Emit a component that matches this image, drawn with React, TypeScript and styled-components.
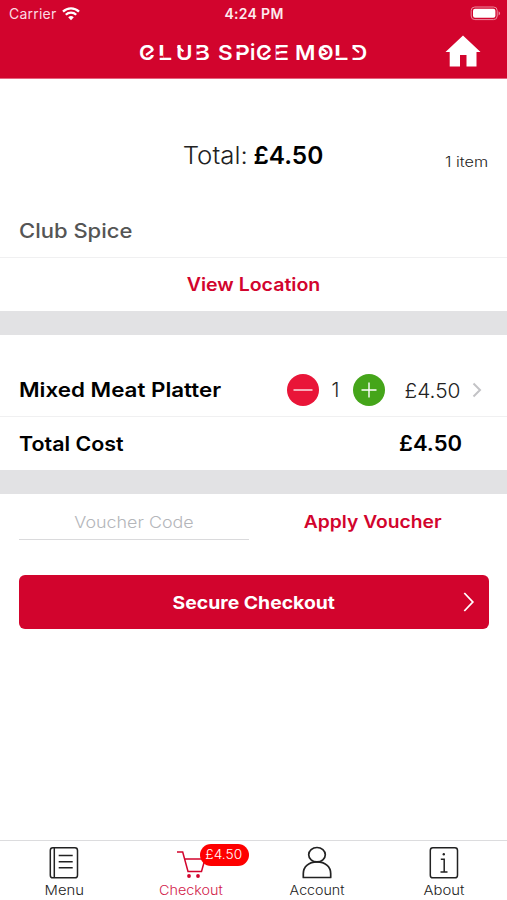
import React from "react";
import styled, { createGlobalStyle, css } from "styled-components";

const RED = "#d2042d";

const GlobalStyle = createGlobalStyle`
  * { box-sizing: border-box; }
  body { margin: 0; background: #fff; font-family: Inter, "Open Sans", sans-serif; color: #000; }
  button { font: inherit; color: inherit; background: none; border: 0; padding: 0; cursor: pointer; }
`;

interface Stretch {
  $stretch: number;
  $from?: "left" | "center" | "right";
}

// Widens the letterforms without changing their height.
const stretched = css<Stretch>`
  display: inline-block;
  white-space: nowrap;
  transform: scaleX(${(p) => p.$stretch});
  transform-origin: ${(p) => p.$from ?? "center"} center;
`;

const Screen = styled.div`
  height: 900px;
  display: flex;
  flex-direction: column;
  overflow: hidden;
`;

const Header = styled.header`
  height: 79px;
  flex: none;
  background: ${RED};
  color: #fff;
  border-bottom: 1px solid #e5647f;
`;

const StatusBar = styled.div`
  height: 27px;
  padding: 0 6px 0 9px;
  display: grid;
  grid-template-columns: 1fr auto 1fr;
  align-items: center;
`;

const Carrier = styled.span`
  display: flex;
  align-items: center;
  gap: 5px;
  font-size: 14px;
  letter-spacing: 0.23px;
  color: #fbdbe2;
`;

const Clock = styled.span`
  font-size: 14px;
  font-weight: 600;
  letter-spacing: 0.3px;
  margin-right: 2px;
  color: #fdeaee;
`;

const Battery = styled.svg`
  justify-self: end;
  display: block;
`;

const TitleBar = styled.div`
  height: 51px;
  padding: 0 26px 0 139px;
  display: flex;
  justify-content: space-between;
  align-items: center;
`;

const Brand = styled.h1`
  margin: 0;
  height: 20px;
  display: flex;
  position: relative;
  font-size: 20.5px;
  font-weight: 600;
  line-height: 20px;
`;

const GlyphCell = styled.span<{ $w: number }>`
  width: ${(p) => p.$w}px;
  flex: none;
`;

const Glyph = styled.span<Stretch>`
  ${stretched}
`;

const BrandDetail = styled.svg`
  position: absolute;
  left: 0;
  top: 0;
`;

const HomeButton = styled.button`
  height: 36px;
  padding-bottom: 3px;
  display: flex;
  align-items: center;
`;

const Summary = styled.section`
  height: 126px;
  padding: 26px 19px 0;
  display: grid;
  grid-template-columns: 1fr auto 1fr;
  align-items: center;
`;

const SummaryTotal = styled.div`
  grid-column: 2;
  display: flex;
  gap: 8px;
  padding-left: 1px;
  font-size: 24px;
  font-weight: 300;
  color: #222;
`;

const SummaryLabel = styled.span<Stretch>`
  ${stretched}
`;

const SummaryAmount = styled.strong<Stretch>`
  ${stretched}
  font-weight: 600;
  color: #000;
`;

const ItemCount = styled.span<Stretch>`
  ${stretched}
  justify-self: end;
  padding-top: 12px;
  font-size: 14px;
  font-weight: 300;
  color: #222;
`;

const Row = styled.div<{ $h: number; $top?: number; $divided?: boolean; $center?: boolean }>`
  height: ${(p) => p.$h}px;
  flex: none;
  padding: ${(p) => p.$top ?? 0}px 19px 0;
  display: flex;
  align-items: center;
  justify-content: ${(p) => (p.$center ? "center" : "space-between")};
  border-bottom: ${(p) => (p.$divided ? "1px solid #f0f0f1" : "0")};
`;

const Merchant = styled.h2<Stretch>`
  ${stretched}
  margin: 0;
  font-size: 20px;
  font-weight: 500;
  color: #555;
`;

const LinkButton = styled.button<Stretch & { $size: number }>`
  ${stretched}
  font-size: ${(p) => p.$size}px;
  font-weight: 600;
  color: ${RED};
`;

const Band = styled.div`
  height: 24px;
  flex: none;
  background: #e2e2e4;
`;

const RowTitle = styled.span<Stretch>`
  ${stretched}
  font-size: 20px;
  font-weight: 600;
`;

const ItemControls = styled.div`
  display: flex;
  align-items: center;
  padding-right: 6px;
`;

const RoundButton = styled.button<{ $color: string }>`
  width: 32px;
  height: 32px;
  border-radius: 50%;
  background: ${(p) => p.$color};
  display: grid;
  place-items: center;
`;

const Quantity = styled.span`
  width: 34px;
  text-align: center;
  font-size: 20px;
  font-weight: 300;
  color: #222;
`;

const Price = styled.span<Stretch>`
  ${stretched}
  margin: 0 12.5px 0 20px;
  font-size: 20.5px;
  font-weight: 300;
  color: #222;
`;

const TotalPrice = styled.span<Stretch>`
  ${stretched}
  margin-right: 26px;
  font-size: 21px;
  font-weight: 600;
`;

const VoucherRow = styled.div`
  height: 46px;
  flex: none;
  padding: 0 19px;
  display: grid;
  grid-template-columns: 230px 1fr;
  column-gap: 8px;
`;

const VoucherField = styled.label`
  display: flex;
  justify-content: center;
  border-bottom: 1.5px solid #dadadc;
`;

const VoucherInput = styled.input<Stretch>`
  ${stretched}
  width: 200px;
  border: 0;
  outline: 0;
  padding: 10px 0 0;
  text-align: center;
  background: none;
  font: 300 16px Inter, sans-serif;
  &::placeholder { color: #b4b6ba; opacity: 1; }
`;

const ApplySlot = styled.div`
  display: grid;
  place-items: center;
  padding: 8px 0 0 1px;
`;

const CheckoutButton = styled.button`
  height: 54px;
  margin: 35px 18.5px 0 19px;
  flex: none;
  border-radius: 6px;
  background: ${RED};
  color: #fff;
  padding: 0 14px;
  display: grid;
  grid-template-columns: 12px 1fr 12px;
  align-items: center;
`;

const CheckoutLabel = styled.span<Stretch>`
  ${stretched}
  font-size: 17.5px;
  font-weight: 700;
`;

const TabBar = styled.nav`
  height: 60px;
  margin-top: auto;
  flex: none;
  border-top: 1px solid #dcdcde;
  display: grid;
  grid-template-columns: repeat(4, 126.5px);
`;

const Tab = styled.button<{ $active?: boolean }>`
  position: relative;
  display: flex;
  flex-direction: column;
  align-items: center;
  padding: 5px 0 0 2px;
  color: ${(p) => (p.$active ? "#d2224a" : "#222")};
`;

const TabLabel = styled.span<Stretch>`
  ${stretched}
  margin-top: 2px;
  font-size: 13px;
  line-height: 17px;
  font-weight: 300;
`;

const Badge = styled.span`
  position: absolute;
  left: 73px;
  top: 3px;
  width: 49px;
  height: 22px;
  border-radius: 11px;
  background: #fe0000;
  color: #fff;
  font-size: 12.5px;
  font-weight: 300;
  line-height: 22px;
  text-align: center;
`;

const BadgeText = styled.span<Stretch>`
  ${stretched}
`;

const WifiIcon = () => (
  <svg width="18" height="14" viewBox="0 0 18 14" fill="none" stroke="#fff" strokeWidth="2.3">
    <path d="M1 4.600a11.400 11.400 0 0 1 16 0" />
    <path d="M3.800 7.700a7.400 7.400 0 0 1 10.400 0" />
    <path d="M9 13.200 6.200 10.300a4 4 0 0 1 5.600 0Z" fill="#fff" stroke="none" />
  </svg>
);

const BatteryIcon = () => (
  <Battery width="31" height="15" viewBox="0 0 31 15">
    <rect x="1.2" y="1" width="26" height="12.6" rx="3.6" fill="none" stroke="#ec8ba0" />
    <rect x="3" y="2.8" width="22.4" height="9" rx="2" fill="#fff" />
    <path d="M28.6 5.2c2 .8 2 3.4 0 4.2Z" fill="#ec8ba0" />
  </Battery>
);

const HomeIcon = () => (
  <svg width="36" height="32" viewBox="0 0 36 32" fill="#fff">
    <path d="M18 .5 35.5 17H31.5V31.5H21.500V20H15V31.5H4.700V17H.5Z" />
  </svg>
);

const MenuIcon = () => (
  <svg width="30" height="34" viewBox="0 0 30 34" fill="none" stroke="currentColor" strokeWidth="1.5">
    <rect x="1.3" y="1.8" width="27.2" height="30" rx="2.6" />
    <path d="M5.3 2v30M9.700 9.500h14M9.700 15.700h14M9.700 21.700h14" />
  </svg>
);

const CartIcon = () => (
  <svg width="30" height="34" viewBox="0 0 30 34" fill="none" stroke={RED} strokeWidth="1.5">
    <path d="M1 6h5.700L12 25.500h13.500L29 13H8.700" />
    <circle cx="13" cy="30" r="1.900" fill={RED} stroke="none" />
    <circle cx="22" cy="30" r="1.900" fill={RED} stroke="none" />
  </svg>
);

const AccountIcon = () => (
  <svg width="30" height="34" viewBox="0 0 30 34" fill="none" stroke="currentColor" strokeWidth="1.7">
    <ellipse cx="15" cy="8.700" rx="8.300" ry="7.200" />
    <path d="M1.300 31.500v-4C1.300 20.500 7 15.900 15 15.900s13.700 4.600 13.700 11.600v4Z" strokeLinejoin="round" />
  </svg>
);

const AboutIcon = () => (
  <svg width="30" height="34" viewBox="0 0 30 34" fill="none" stroke="currentColor" strokeWidth="1.5">
    <rect x="1.3" y="1.8" width="27.2" height="30" rx="2.6" />
    <path d="M11.800 13.200h3.400v12.800M11.500 26h7" />
    <circle cx="14.800" cy="8.300" r="1.200" fill="currentColor" stroke="none" />
  </svg>
);

// Letter, cell width, horizontal stretch
const BRAND_GLYPHS: [string, number, number][] = [
  ["C", 19.3, 1.05], ["L", 17.5, 1.22], ["U", 19, 1.1], ["B", 23, 1.1],
  ["S", 17, 1.1], ["P", 15.2, 1.12], ["i", 6.5, 1], ["C", 17.8, 1.05], ["E", 21, 1.22],
  ["M", 22.5, 1.08], ["O", 16.7, 1], ["L", 16.500, 1.25], ["D", 15, 1.1],
];

export default function App() {
  return (
    <>
      <GlobalStyle />
      <Screen>
        <Header>
          <StatusBar>
            <Carrier>Carrier <WifiIcon /></Carrier>
            <Clock>4:24 PM</Clock>
            <BatteryIcon />
          </StatusBar>
          <TitleBar>
            <Brand aria-label="Club Spice Mold">
              {BRAND_GLYPHS.map(([letter, width, stretch], i) => (
                <GlyphCell key={i} $w={width}>
                  <Glyph $stretch={stretch} $from="left">{letter}</Glyph>
                </GlyphCell>
              ))}
              <BrandDetail width="230" height="20" fill="none" strokeWidth="2.2">
                {/* stencil gaps in the stems */}
                <path stroke={RED} strokeWidth="4.400" d="M21.800 12.800v2M59.500 5.400v3.200M59.500 11.400v3.300M98.500 5.400v3.300M139.500 5.400v3.200M139.500 11.400v3.300M198.500 12.800v2M215 5.400v9.400" />
                {/* inner strokes of the rounded letters */}
                <path stroke="#fff" d="M7 12 14 6.800M124 12 131 6.800M38.500 3.500l6 5M181 4.500l6 4M182 11.500c4 0 6-1 6-3M214 4.500l6 5" />
              </BrandDetail>
            </Brand>
            <HomeButton aria-label="Home"><HomeIcon /></HomeButton>
          </TitleBar>
        </Header>
        <Summary>
          <SummaryTotal>
            <SummaryLabel $stretch={1.075}>Total:</SummaryLabel>
            <SummaryAmount $stretch={1.018}>£4.50</SummaryAmount>
          </SummaryTotal>
          <ItemCount $stretch={1.16} $from="right">1 item</ItemCount>
        </Summary>
        <Row $h={53} $divided><Merchant $stretch={1.1} $from="left">Club Spice</Merchant></Row>
        <Row $h={53} $center><LinkButton $size={18} $stretch={1.086}>View Location</LinkButton></Row>
        <Band />
        <Row $h={82} $top={29} $divided>
          <RowTitle $stretch={1.118} $from="left">Mixed Meat Platter</RowTitle>
          <ItemControls>
            <RoundButton $color="#e91538" aria-label="Remove one">
              <svg width="20" height="20" stroke="#fff" strokeWidth="1.3"><path d="M.5 10h19" /></svg>
            </RoundButton>
            <Quantity>1</Quantity>
            <RoundButton $color="#45a51a" aria-label="Add one">
              <svg width="16" height="16" stroke="#fff" strokeWidth="1.4"><path d="M.5 8h15M8 .5v15" /></svg>
            </RoundButton>
            <Price $stretch={1.02}>£4.50</Price>
            <svg width="10" height="16" fill="none" stroke="#c3c3c6" strokeWidth="2"><path d="m1.500 1.500 6.500 6.500-6.500 6.500" /></svg>
          </ItemControls>
        </Row>
        <Row $h={53}>
          <RowTitle $stretch={1.07} $from="left">Total Cost</RowTitle>
          <TotalPrice $stretch={1.05} $from="right">£4.50</TotalPrice>
        </Row>
        <Band />
        <VoucherRow>
          <VoucherField><VoucherInput placeholder="Voucher Code" $stretch={1.117} /></VoucherField>
          <ApplySlot><LinkButton $size={17.5} $stretch={1.1}>Apply Voucher</LinkButton></ApplySlot>
        </VoucherRow>
        <CheckoutButton>
          <span />
          <CheckoutLabel $stretch={1.107}>Secure Checkout</CheckoutLabel>
          <svg width="12" height="20" fill="none" stroke="#fff" strokeWidth="1.8"><path d="m1.300 1 8.500 9-8.500 9" /></svg>
        </CheckoutButton>
        <TabBar>
          <Tab><MenuIcon /><TabLabel $stretch={1.14}>Menu</TabLabel></Tab>
          <Tab $active><CartIcon /><TabLabel $stretch={1.105}>Checkout</TabLabel><Badge><BadgeText $stretch={1.1}>£4.50</BadgeText></Badge></Tab>
          <Tab><AccountIcon /><TabLabel $stretch={1.095}>Account</TabLabel></Tab>
          <Tab><AboutIcon /><TabLabel $stretch={1.14}>About</TabLabel></Tab>
        </TabBar>
      </Screen>
    </>
  );
}
